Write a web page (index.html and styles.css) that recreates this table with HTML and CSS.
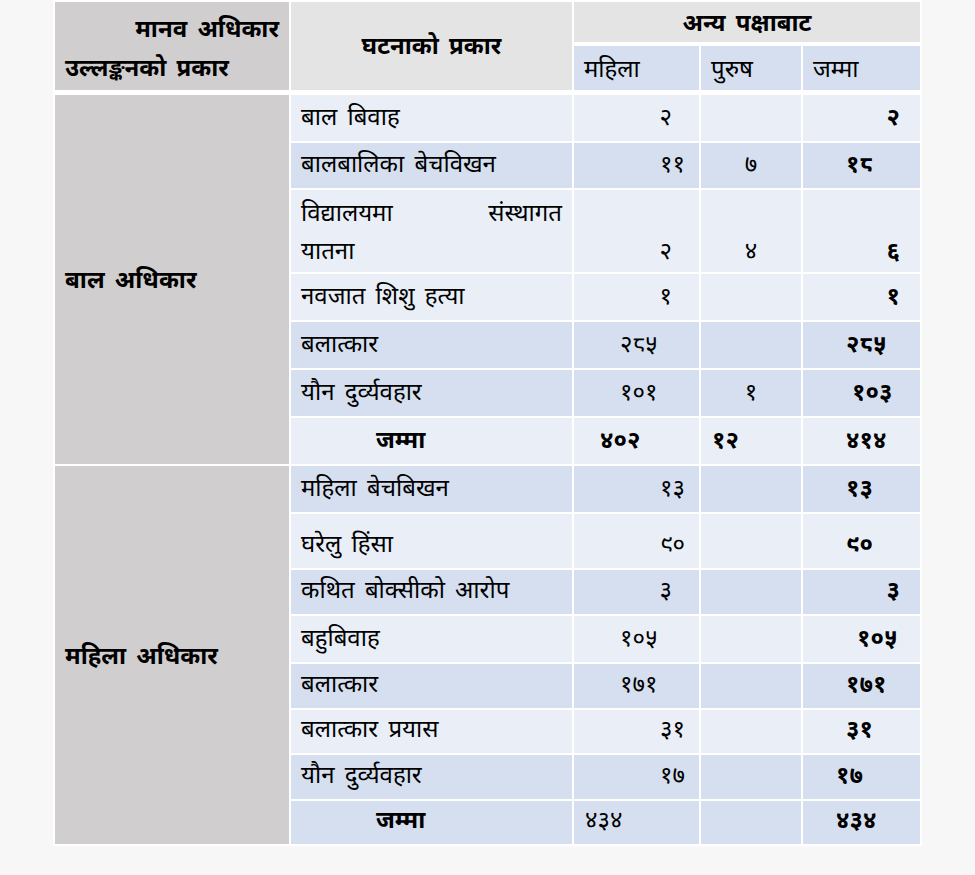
FILE: index.html
```html
<!DOCTYPE html>
<html lang="ne">
<head>
<meta charset="utf-8">
<title>मानव अधिकार उल्लङ्कन</title>
<link rel="stylesheet" href="styles.css">
</head>
<body>
<table class="rights">
  <colgroup>
    <col class="c1"><col class="c2"><col class="c3"><col class="c4"><col class="c5">
  </colgroup>
  <thead>
    <tr class="h1">
      <th rowspan="2" class="type hb">
        <span class="l1">मानव अधिकार</span>
        <span class="l2">उल्लङ्कनको प्रकार</span>
      </th>
      <th rowspan="2" class="ev hb">घटनाको प्रकार</th>
      <th colspan="3" class="grp">अन्य पक्षाबाट</th>
    </tr>
    <tr class="h2">
      <th class="sub hb">महिला</th>
      <th class="sub hb">पुरुष</th>
      <th class="sub hb">जम्मा</th>
    </tr>
  </thead>
  <tbody>
    <tr class="lt s46">
      <td rowspan="7" class="cat">बाल अधिकार</td>
      <td class="name">बाल बिवाह</td>
      <td class="n3 r2">२</td><td class="n4"></td><td class="n5 r5">२</td>
    </tr>
    <tr class="bl s45">
      <td class="name">बालबालिका बेचविखन</td>
      <td class="n3 r1">११</td><td class="n4">७</td><td class="n5">१८</td>
    </tr>
    <tr class="lt tall">
      <td class="name"><span class="jline"><span>विद्यालयमा</span><span>संस्थागत</span></span><span class="jlast">यातना</span></td>
      <td class="n3 r2">२</td><td class="n4">४</td><td class="n5 r5">६</td>
    </tr>
    <tr class="lt s46">
      <td class="name">नवजात शिशु हत्या</td>
      <td class="n3 r2">१</td><td class="n4"></td><td class="n5 r5">१</td>
    </tr>
    <tr class="bl s46">
      <td class="name">बलात्कार</td>
      <td class="n3 l3">२८५</td><td class="n4"></td><td class="n5">२८५</td>
    </tr>
    <tr class="bl s46">
      <td class="name">यौन दुर्व्यवहार</td>
      <td class="n3 l3">१०१</td><td class="n4">१</td><td class="n5 l5b">१०३</td>
    </tr>
    <tr class="lt s46">
      <td class="name total">जम्मा</td>
      <td class="n3 l2 strong">४०२</td><td class="n4 l4 strong">१२</td><td class="n5">४१४</td>
    </tr>
    <tr class="bl s46">
      <td rowspan="8" class="cat">महिला अधिकार</td>
      <td class="name">महिला बेचबिखन</td>
      <td class="n3 r1">१३</td><td class="n4"></td><td class="n5">१३</td>
    </tr>
    <tr class="lt s54">
      <td class="name">घरेलु हिंसा</td>
      <td class="n3 r1">९०</td><td class="n4"></td><td class="n5">९०</td>
    </tr>
    <tr class="bl s44">
      <td class="name">कथित बोक्सीको आरोप</td>
      <td class="n3 r2">३</td><td class="n4"></td><td class="n5 r5">३</td>
    </tr>
    <tr class="lt s46">
      <td class="name">बहुबिवाह</td>
      <td class="n3 l3">१०५</td><td class="n4"></td><td class="n5 l5c">१०५</td>
    </tr>
    <tr class="bl s44">
      <td class="name">बलात्कार</td>
      <td class="n3 l3">१७१</td><td class="n4"></td><td class="n5">१७१</td>
    </tr>
    <tr class="lt s43">
      <td class="name">बलात्कार प्रयास</td>
      <td class="n3 r1">३१</td><td class="n4"></td><td class="n5">३१</td>
    </tr>
    <tr class="bl s44">
      <td class="name">यौन दुर्व्यवहार</td>
      <td class="n3 r1">१७</td><td class="n4"></td><td class="n5 l5d">१७</td>
    </tr>
    <tr class="bl s43">
      <td class="name total">जम्मा</td>
      <td class="n3 l1">४३४</td><td class="n4"></td><td class="n5 l5d">४३४</td>
    </tr>
  </tbody>
</table>
</body>
</html>
```

FILE: styles.css
```css
html, body {
  margin: 0;
  padding: 0;
  background: #f7f7f7;
}

body {
  font-family: "Noto Sans Devanagari", "Lohit Devanagari", "Mangal", "Noto Sans", sans-serif;
  color: #000;
}

.rights {
  margin: 0 0 0 53px;
  table-layout: fixed;
  width: 869px;
  border-collapse: separate;
  border-spacing: 2px;
  background: #ffffff;
  font-size: 24px;
  word-spacing: 4px;
}

.c1 { width: 234px; }
.c2 { width: 281px; }
.c3 { width: 125px; }
.c4 { width: 100px; }
.c5 { width: 117px; }

th, td {
  padding: 0 10px;
  line-height: 37px;
  box-sizing: border-box;
}

/* header */
thead th {
  font-weight: bold;
}

.h1 th.grp {
  height: 42px;
  line-height: 32px;
  border-bottom: 2px solid #ffffff;
  padding-top: 6px;
}

.h2 th {
  height: 47px;
  line-height: 36px;
}

.hb {
  border-bottom: 3px solid #ffffff;
}

.type {
  background: #d0cece;
  text-align: left;
  vertical-align: middle;
  line-height: 39px;
  padding-top: 9px;
}

.type .l1 {
  display: block;
  text-align: right;
}

.type .l2 {
  display: block;
  text-align: left;
}

.ev {
  background: #e4e4e4;
  text-align: center;
  vertical-align: middle;
  padding-top: 4px;
}

.grp {
  background: #e4e4e4;
  text-align: center;
  vertical-align: middle;
}

.sub {
  background: #d5dfef;
  font-weight: normal;
  text-align: left;
  vertical-align: middle;
  padding-top: 5px;
}

/* body */
tbody td {
  vertical-align: bottom;
  padding-bottom: 3px;
}

.lt td { background: #e9eef7; }
.bl td { background: #d5dfef; }

tbody td.cat {
  background: #d0cece;
  font-weight: bold;
  vertical-align: middle;
  padding-bottom: 0;
  padding-top: 6px;
}

.s45 td { height: 45px; }
.s46 td { height: 46px; }
.s54 td { height: 54px; }
.s44 td { height: 44px; }
.s43 td { height: 43px; }

.tall td {
  height: 82px;
  line-height: 38px;
  padding-bottom: 0;
}

.name { text-align: left; }

.jline {
  display: flex;
  justify-content: space-between;
}

.jlast { display: block; }

.name.total {
  font-weight: bold;
  padding-left: 85px;
}

.strong { font-weight: bold; }

/* column 3: women */
.n3 { text-align: right; }
.n3.r1 { padding-right: 14px; }
.n3.r2 { padding-right: 27px; }
.n3.l3 { text-align: left; padding-left: 46px; }
.n3.l2 { text-align: left; padding-left: 26px; }
.n3.l1 { text-align: left; padding-left: 11px; }

/* column 4: men */
.n4 { text-align: center; }
.n4.l4 { text-align: left; padding-left: 11px; }

/* column 5: total */
.n5 {
  font-weight: bold;
  text-align: left;
  padding-left: 43px;
}
.n5.r5 { text-align: right; padding-right: 20px; }
.n5.l5b { padding-left: 49px; }
.n5.l5c { padding-left: 54px; }
.n5.l5d { padding-left: 33px; }
```
